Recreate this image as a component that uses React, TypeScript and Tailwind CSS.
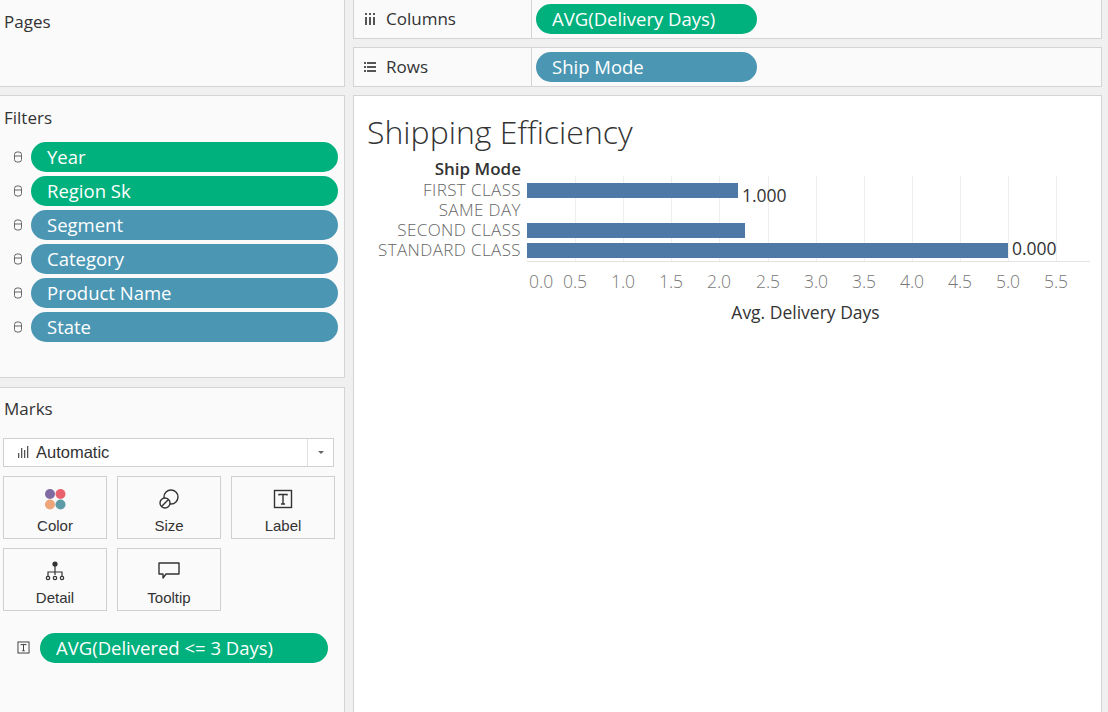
import React from "react";

const GREEN = "bg-[#00b07d]";
const BLUE = "bg-[#4a96b3]";

type Filter = { name: string; green?: boolean };

const filters: Filter[] = [
  { name: "Year", green: true },
  { name: "Region Sk", green: true },
  { name: "Segment" },
  { name: "Category" },
  { name: "Product Name" },
  { name: "State" },
];

type Row = { mode: string; value: number | null; label?: string; labelPos?: string };

const rows: Row[] = [
  { mode: "FIRST CLASS", value: 2.19, label: "1.000", labelPos: "mt-[9px]" },
  { mode: "SAME DAY", value: null },
  { mode: "SECOND CLASS", value: 2.27 },
  { mode: "STANDARD CLASS", value: 5.0, label: "0.000", labelPos: "-mt-[5px]" },
];

const PX_PER_UNIT = 96.2;
const ticks = [0.5, 1, 1.5, 2, 2.5, 3, 3.5, 4, 4.5, 5, 5.5];

const sans = "font-['Open_Sans','Lato',sans-serif]";
const arial = "font-['Liberation_Sans',Arial,sans-serif]";
const chartFont = "font-['Open_Sans','Lato',sans-serif]";

function FilterIcon() {
  return (
    <svg width="10" height="12" viewBox="0 0 10 12" className="shrink-0">
      <rect x="1.5" y="1" width="7" height="10" rx="2.5" fill="none" stroke="#666" strokeWidth="1" />
      <line x1="1.5" y1="5" x2="8.5" y2="5" stroke="#666" strokeWidth="1" />
    </svg>
  );
}

function Pill({ text, green, className = "" }: { text: string; green?: boolean; className?: string }) {
  return (
    <div
      className={`h-[30px] rounded-full flex items-center pl-[16px] text-white text-[18.5px] ${sans} ${
        green ? GREEN : BLUE
      } ${className}`}
    >
      {text}
    </div>
  );
}

function ColorIcon() {
  return (
    <svg width="22" height="22" viewBox="0 0 22 22">
      <circle cx="6" cy="6" r="5" fill="#7f6ba1" />
      <circle cx="16.5" cy="6" r="5" fill="#e9636f" />
      <circle cx="6" cy="16.5" r="5" fill="#eea57a" />
      <circle cx="16.5" cy="16.5" r="5" fill="#5f9ba6" />
    </svg>
  );
}

function SizeIcon() {
  return (
    <svg width="22" height="22" viewBox="0 0 22 22" fill="none" stroke="#333" strokeWidth="1.4">
      <circle cx="13" cy="9" r="7" />
      <circle cx="7" cy="15" r="5" fill="#fafafa" />
      <line x1="3.8" y1="18.2" x2="10.2" y2="11.8" />
    </svg>
  );
}

function LabelIcon({ size = 20 }: { size?: number }) {
  return (
    <svg width={size} height={size} viewBox="0 0 20 20" fill="none" stroke="#333">
      <rect x="1.5" y="1.5" width="17" height="17" strokeWidth="1.4" />
      <path d="M6 6.5V5.5H14V6.5M10 5.5V15M8 15H12" strokeWidth="1.4" />
    </svg>
  );
}

function DetailIcon() {
  return (
    <svg width="22" height="22" viewBox="0 0 22 22" fill="none" stroke="#333" strokeWidth="1.2">
      <circle cx="11" cy="4" r="2.6" fill="#333" stroke="none" />
      <line x1="11" y1="6" x2="11" y2="15" />
      <path d="M4 16V12H18V16" />
      <circle cx="4" cy="18" r="1.7" />
      <circle cx="11" cy="18" r="1.7" />
      <circle cx="18" cy="18" r="1.7" />
    </svg>
  );
}

function TooltipIcon() {
  return (
    <svg width="24" height="22" viewBox="0 0 24 22" fill="none" stroke="#333" strokeWidth="1.4">
      <path d="M2 3H22V14H9L6 18V14H2Z" strokeLinejoin="round" />
    </svg>
  );
}

function MarkCard({ icon, label }: { icon: React.ReactNode; label: string }) {
  return (
    <div className="h-[63px] border border-[#d0d0d0] bg-[#fafafa] flex flex-col items-center pt-[11px]">
      <div className="h-[24px] flex items-center">{icon}</div>
      <div className={`mt-[5px] text-[15px] text-[#333] ${arial}`}>{label}</div>
    </div>
  );
}

function ColumnsIcon() {
  return (
    <svg width="12" height="12" viewBox="0 0 12 12" fill="#555">
      <rect x="1" y="0" width="2" height="2" />
      <rect x="5" y="0" width="2" height="2" />
      <rect x="9" y="0" width="2" height="2" />
      <rect x="1" y="4" width="2" height="8" />
      <rect x="5" y="4" width="2" height="8" />
      <rect x="9" y="4" width="2" height="8" />
    </svg>
  );
}

function RowsIcon() {
  return (
    <svg width="12" height="12" viewBox="0 0 12 12" fill="#555">
      <rect x="0" y="1" width="2" height="2" />
      <rect x="0" y="5" width="2" height="2" />
      <rect x="0" y="9" width="2" height="2" />
      <rect x="3" y="1" width="9" height="2" />
      <rect x="3" y="5" width="9" height="2" />
      <rect x="3" y="9" width="9" height="2" />
    </svg>
  );
}

function Shelf({ icon, title, pill, green }: { icon: React.ReactNode; title: string; pill: string; green?: boolean }) {
  return (
    <div className="flex h-full bg-[#fafafa] border border-[#d4d4d4] border-t-0">
      <div className="w-[178px] flex items-center pl-[10px] gap-[10px] border-r border-[#d4d4d4]">
        {icon}
        <span className={`text-[17px] text-[#333] ${sans}`}>{title}</span>
      </div>
      <div className="flex items-center pl-[4px]">
        <Pill text={pill} green={green} className="w-[221px] h-[29px] pl-[15px]" />
      </div>
    </div>
  );
}

function Chart() {
  const plotW = 563;
  return (
    <div className={`pt-[16px] ${chartFont}`}>
      <div className="pl-[13px] text-[32px] font-light text-[#333] leading-[40px]">Shipping Efficiency</div>
      <div className="flex mt-[6px]">
        <div className="w-[167px] flex flex-col items-end">
          <div className="h-[22px] leading-[22px] font-semibold text-[#333] text-[17px]">Ship Mode</div>
          {rows.map((r) => (
            <div
              key={r.mode}
              className="h-[20px] leading-[20px] font-light text-[#666] text-[17px] tracking-[0.4px]"
            >
              {r.mode}
            </div>
          ))}
        </div>
        <div className="ml-[6px]">
          <div className="h-[22px]" />
          <div className="relative border-b border-[#e3e3e3]" style={{ width: plotW }}>
            {ticks.map((t) => (
              <div
                key={t}
                className="absolute top-[-4px] bottom-0 w-px bg-[#eeeeee]"
                style={{ left: Math.round(t * PX_PER_UNIT) }}
              />
            ))}
            <div className="relative pb-[1px]">
              {rows.map((r) => (
                <div key={r.mode} className="h-[20px] flex items-center">
                  {r.value !== null && (
                    <div className="h-[15px] bg-[#4e79a7]" style={{ width: Math.round(r.value * PX_PER_UNIT) }} />
                  )}
                  {r.label && (
                    <span className={`ml-[4px] ${r.labelPos} text-[17.5px] text-[#333] leading-[16px]`}>
                      {r.label}
                    </span>
                  )}
                </div>
              ))}
            </div>
          </div>
          <div className="relative h-[36px] text-[17.5px] font-light text-[#777]" style={{ width: plotW }}>
            <span className="absolute top-[6px] left-[2px]">0.0</span>
            {ticks.map((t) => (
              <span
                key={t}
                className="absolute top-[6px] -translate-x-1/2"
                style={{ left: Math.round(t * PX_PER_UNIT) }}
              >
                {t.toFixed(1)}
              </span>
            ))}
          </div>
          <div className="w-[563px] text-center text-[17.5px] font-medium text-[#333] -ml-[3px] mt-[1px]">
            Avg. Delivery Days
          </div>
        </div>
      </div>
    </div>
  );
}

export default function App() {
  return (
    <div className="w-[1108px] h-[712px] bg-[#f0f0f0] flex overflow-hidden">
      {/* left cards */}
      <div className="w-[345px] shrink-0 flex flex-col">
        <div className="h-[87px] bg-[#fafafa] border-r border-b border-[#d4d4d4] pl-[4px] pt-[9px]">
          <div className={`text-[17px] text-[#333] ${sans}`}>Pages</div>
        </div>
        <div className="mt-[8px] h-[283px] bg-[#fafafa] border border-l-0 border-[#d4d4d4] pl-[4px] pt-[9px]">
          <div className={`text-[17px] text-[#333] ${sans}`}>Filters</div>
          <div className="mt-[11px] flex flex-col gap-[4px]">
            {filters.map((f) => (
              <div key={f.name} className="flex items-center">
                <div className="w-[27px] flex justify-center pl-[1px]">
                  <FilterIcon />
                </div>
                <Pill text={f.name} green={f.green} className="w-[307px]" />
              </div>
            ))}
          </div>
        </div>
        <div className="mt-[9px] flex-1 bg-[#fafafa] border border-l-0 border-b-0 border-[#d4d4d4] pl-[3px] pr-[10px] pt-[8px]">
          <div className={`pl-[1px] text-[17px] text-[#333] ${sans}`}>Marks</div>
          <div className="mt-[16px] h-[29px] border border-[#d0d0d0] bg-white flex items-center">
            <div className="flex-1 flex items-center pl-[14px] gap-[6px]">
              <svg width="12" height="12" viewBox="0 0 12 12" fill="#555">
                <rect x="0" y="7" width="1.3" height="5" />
                <rect x="3" y="2" width="1.3" height="10" />
                <rect x="6" y="4" width="1.3" height="8" />
                <rect x="9" y="0" width="1.3" height="12" />
              </svg>
              <span className={`text-[16.5px] text-[#333] ${arial}`}>Automatic</span>
            </div>
            <div className="w-[26px] h-full border-l border-[#e0e0e0] flex items-center justify-center">
              <svg width="8" height="5" viewBox="0 0 8 5">
                <path d="M1 1H7L4 4Z" fill="#666" />
              </svg>
            </div>
          </div>
          <div className="mt-[9px] grid grid-cols-3 gap-x-[10px] gap-y-[9px] w-[332px]">
            <MarkCard icon={<ColorIcon />} label="Color" />
            <MarkCard icon={<SizeIcon />} label="Size" />
            <MarkCard icon={<LabelIcon />} label="Label" />
            <MarkCard icon={<DetailIcon />} label="Detail" />
            <MarkCard icon={<TooltipIcon />} label="Tooltip" />
          </div>
          <div className="mt-[22px] flex items-center">
            <div className="w-[37px] flex justify-center pl-[3px]">
              <LabelIcon size={13} />
            </div>
            <Pill text="AVG(Delivered <= 3 Days)" green className="w-[288px] h-[29px] pl-[16px]" />
          </div>
        </div>
      </div>

      {/* right */}
      <div className="ml-[8px] w-[749px] shrink-0 flex flex-col">
        <div className="h-[39px]">
          <Shelf icon={<ColumnsIcon />} title="Columns" pill="AVG(Delivery Days)" green />
        </div>
        <div className="mt-[8px] h-[40px]">
          <div className="h-full border-t border-[#d4d4d4]">
            <Shelf icon={<RowsIcon />} title="Rows" pill="Ship Mode" />
          </div>
        </div>
        <div className="mt-[8px] flex-1 bg-white border border-b-0 border-[#d4d4d4]">
          <Chart />
        </div>
      </div>
    </div>
  );
}
